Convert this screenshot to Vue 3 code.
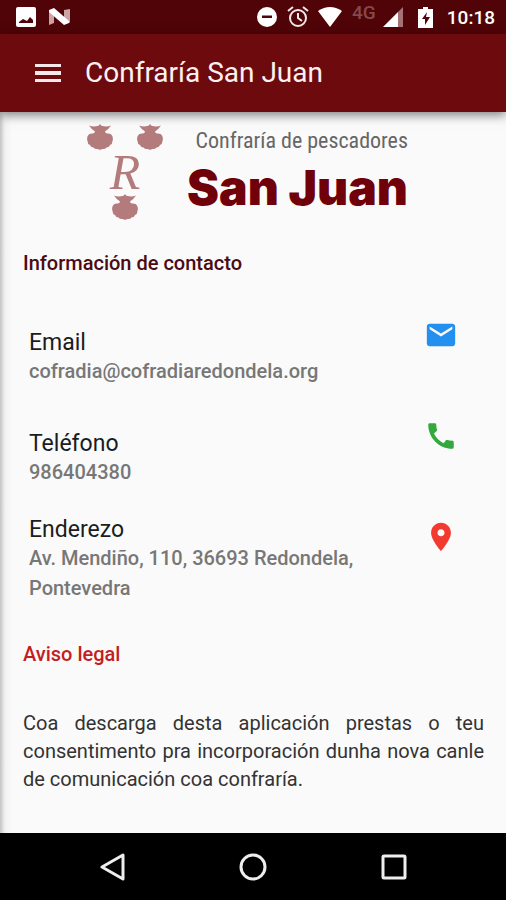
<script setup>
import { ref } from 'vue'

const menuOpen = ref(false)

const contacts = [
    {
        title: 'Email',
        text: 'cofradia@cofradiaredondela.org',
        href: 'mailto:cofradia@cofradiaredondela.org',
        color: 'blue',
        icon: 'M20 4H4c-1.1 0-1.99.9-1.99 2L2 18c0 1.1.9 2 2 2h16c1.1 0 2-.9 2-2V6c0-1.100-.9-2-2-2zm0 4l-8 5-8-5V6l8 5 8-5v2z'
    },
    {
        title: 'Teléfono',
        text: '986404380',
        href: 'tel:986404380',
        color: 'green',
        icon: 'M20.01 15.380c-1.23 0-2.420-.2-3.530-.560-.350-.120-.740-.030-1.010.240l-1.570 1.970c-2.830-1.350-5.480-3.900-6.890-6.830l1.950-1.660c.270-.280.350-.670.240-1.020-.370-1.110-.560-2.300-.560-3.530 0-.540-.450-.990-.990-.990H4.190C3.650 3 3 3.240 3 3.990 3 13.280 10.730 21 20.010 21c.710 0 .990-.630.990-1.180v-3.450c0-.540-.450-.990-.990-.990z'
    },
    {
        title: 'Enderezo',
        text: 'Av. Mendiño, 110, 36693 Redondela, Pontevedra',
        href: 'geo:0,0?q=Redondela',
        color: 'red',
        icon: 'M12 2C8.130 2 5 5.130 5 9c0 5.250 7 13 7 13s7-7.750 7-13c0-3.870-3.130-7-7-7zm0 9.500c-1.380 0-2.500-1.120-2.500-2.500s1.120-2.500 2.500-2.500 2.500 1.120 2.500 2.500-1.120 2.500-2.500 2.500z'
    }
]

// vieira do escudo
const shell = 'M13 0Q14 2 15.5 2Q20 3 24 1.500Q21 6 18 7.500Q18 9 20 9.500Q24 9 25 11.500Q26.500 14 25.500 17Q25.500 20 23 21Q22 23.500 19.500 23.500Q18 25.500 15.500 25Q13 26.500 10.500 25Q8 25.500 6.500 23.500Q4 23.500 3 21Q.5 20 .5 17Q-.5 14 1 11.500Q2 9 6 9.500Q8 9 8 7.500Q5 6 2 1.500Q6 3 10.500 2Q12 2 13 0Z'
</script>

<template>
    <div class="app">
        <div class="status-bar">
            <svg class="status-icon" viewBox="0 0 20 20">
                <path fill="#fff" fill-rule="evenodd" d="M2 0h16q2 0 2 2v16q0 2-2 2H2q-2 0-2-2V2q0-2 2-2zM3 16h14v-3l-3-3-3 4-4-2-4 3z" />
            </svg>
            <svg class="status-icon n-icon" viewBox="0 0 21 18">
                <path fill="#c9a3a5" d="M0 2l5 3v10l-5 2zM15 2l6-1v14l-6-4z" />
                <path fill="#fff" d="M0 2l5-2 15 13v2l-5 2L0 4z" />
            </svg>
            <span class="spacer"></span>
            <svg class="status-icon" viewBox="0 0 20 20">
                <circle cx="10" cy="10" r="10" fill="#fff" />
                <path fill="#500408" d="M5 8.500h10v2.500H5z" />
            </svg>
            <svg class="status-icon alarm" viewBox="0 0 22 22" fill="none" stroke="#f5e8e8" stroke-width="2">
                <circle cx="11" cy="12" r="8" />
                <path d="M11 7v5l4 3M1 5l5-4M21 5l-5-4" />
            </svg>
            <svg class="status-icon wifi" viewBox="0 0 24 20">
                <path fill="#fff" d="M0 4Q12-4 24 4L12 20z" />
            </svg>
            <span class="network">4G</span>
            <svg class="status-icon signal" viewBox="0 0 20 20">
                <path fill="#a77275" d="M15 5l5-5v20h-5z" />
                <path fill="#fff" d="M0 20L15 5v15z" />
            </svg>
            <svg class="status-icon battery" viewBox="0 0 15 21">
                <path fill="#fff" d="M5 0h5v2h5v19H0V2h5z" />
                <path fill="#500408" d="M9 5l-5 7h3v6l5-8H8z" />
            </svg>
            <span class="clock">10:18</span>
        </div>

        <header class="app-bar">
            <button type="button" class="menu-button" aria-label="Menú" :aria-expanded="menuOpen" @click="menuOpen = !menuOpen">
                <svg viewBox="0 0 26 18">
                    <path fill="#f6e9e9" d="M0 0h26v3H0zM0 7h26v4H0zM0 15h26v3H0z" />
                </svg>
            </button>
            <h1>Confraría San Juan</h1>
        </header>

        <main class="content">
            <div class="logo">
                <div class="crest">
                    <svg class="shell" viewBox="0 0 26 26"><path :d="shell" /></svg>
                    <svg class="shell" viewBox="0 0 26 26"><path :d="shell" /></svg>
                    <span class="initial">R</span>
                    <svg class="shell last" viewBox="0 0 26 26"><path :d="shell" /></svg>
                </div>
                <div class="brand">
                    <span class="brand-top">Confraría de pescadores</span>
                    <span class="brand-name">San Juan</span>
                </div>
            </div>

            <h2>Información de contacto</h2>

            <div class="contacts">
                <div v-for="item in contacts" :key="item.title" class="contact">
                    <div class="contact-text">
                        <h3>{{ item.title }}</h3>
                        <p>{{ item.text }}</p>
                    </div>
                    <a :href="item.href" class="contact-icon" :class="item.color" :aria-label="item.title">
                        <svg viewBox="0 0 24 24"><path :d="item.icon" /></svg>
                    </a>
                </div>
            </div>

            <h2 class="legal-title">Aviso legal</h2>
            <p class="legal">Coa descarga desta aplicación prestas o teu consentimento pra incorporación dunha nova canle de comunicación coa confraría.</p>
        </main>

        <nav class="nav-bar">
            <button type="button" aria-label="Atrás">
                <svg viewBox="0 0 28 28"><path d="M25 2v24L4 14z" /></svg>
            </button>
            <button type="button" aria-label="Inicio">
                <svg viewBox="0 0 28 28"><circle cx="14" cy="14" r="12" /></svg>
            </button>
            <button type="button" aria-label="Recentes">
                <svg viewBox="0 0 28 28"><rect x="3" y="3" width="22" height="22" rx="1" /></svg>
            </button>
        </nav>
    </div>
</template>

<style>
body {
    margin: 0;
    background: #fafafa;
}
</style>

<style scoped>
.app {
    display: flex;
    flex-direction: column;
    min-height: 100vh;
    font-family: Roboto, "Liberation Sans", sans-serif;
    color: #222;
}

h1, h2, h3, p {
    margin: 0;
}

button {
    padding: 0;
    border: 0;
    background: none;
    cursor: pointer;
}

svg {
    display: block;
}

.status-bar {
    display: flex;
    align-items: center;
    height: 34px;
    padding: 0 11px 0 16px;
    background: #500408;
    color: #fff;
}

.status-icon {
    width: 20px;
    height: 20px;
}

.n-icon {
    width: 21px;
    height: 18px;
    margin-left: 13px;
}

.spacer {
    flex: 1;
}

.alarm {
    width: 22px;
    height: 22px;
    margin-left: 10px;
}

.wifi {
    width: 24px;
    margin-left: 9px;
}

.network {
    align-self: flex-start;
    margin-left: 10px;
    font-size: 19px;
    line-height: 26px;
    font-weight: 500;
    color: #85494c;
}

.signal {
    margin-left: 7px;
}

.battery {
    width: 15px;
    height: 21px;
    margin-left: 15px;
}

.clock {
    margin-left: 14px;
    font-size: 19px;
    font-weight: 500;
}

.app-bar {
    position: relative;
    z-index: 2;
    display: flex;
    align-items: center;
    gap: 24px;
    height: 78px;
    padding: 0 35px;
    background: #6d0a0e;
    box-shadow: 0 3px 10px rgba(0, 0, 0, 0.5);
    color: #fcf1f1;
}

.menu-button svg {
    width: 26px;
    height: 18px;
}

.app-bar h1 {
    font-size: 28px;
    line-height: 32px;
    font-weight: 400;
}

.content {
    flex: 1;
    padding: 12px 22px 40px 23px;
    background: linear-gradient(to right, #c4c4c4, #f2f2f2 5px, #fafafa 12px);
}

.logo {
    display: flex;
    justify-content: center;
    gap: 24px;
    height: 96px;
    padding-right: 12px;
}

.crest {
    display: grid;
    grid-template-columns: 26px 26px;
    grid-template-rows: 26px 44px 26px;
    column-gap: 24px;
    justify-items: center;
    align-items: center;
    color: #b47b7d;
}

.shell {
    width: 26px;
    height: 26px;
    fill: #b47b7d;
}

.shell.last,
.initial {
    grid-column: 1 / 3;
}

.initial {
    font-family: "Liberation Serif", serif;
    font-size: 50px;
    font-style: italic;
    line-height: 44px;
}

.brand {
    display: flex;
    flex-direction: column;
    align-items: flex-end;
}

.brand-top {
    font-family: "Ubuntu Condensed", "Roboto Condensed", "Liberation Sans Narrow", Lato, sans-serif;
    font-size: 22px;
    line-height: 34px;
    color: #666;
}

.brand-name {
    font-family: "Arial Black", Inter, sans-serif;
    font-size: 48px;
    line-height: 60px;
    font-weight: 900;
    color: #70000a;
}

h2 {
    margin-top: 29px;
    font-size: 20px;
    line-height: 28px;
    font-weight: 500;
    color: #4a0b14;
}

.contacts {
    margin-top: 30px;
}

.contact {
    display: flex;
    align-items: center;
    justify-content: space-between;
    min-height: 101px;
    padding: 0 26px 0 6px;
}

.contact-text {
    max-width: 360px;
}

h3 {
    font-size: 23px;
    line-height: 26px;
    font-weight: 400;
    color: #1c1c1c;
}

.contact-text p {
    font-size: 20px;
    line-height: 30px;
    font-weight: 500;
    color: #777;
}

.contact-icon {
    align-self: flex-start;
    padding-top: 11px;
}

.contact-icon svg {
    width: 34px;
    height: 34px;
    fill: currentColor;
}

.blue {
    color: #2390f0;
}

.green {
    color: #33a83c;
}

.red {
    color: #f23a30;
}

.legal-title {
    margin-top: 30px;
    color: #c41d22;
}

.legal {
    margin-top: 41px;
    font-size: 20px;
    line-height: 28px;
    text-align: justify;
    color: #333;
}

.nav-bar {
    display: flex;
    align-items: center;
    justify-content: space-around;
    height: 67px;
    padding: 0 42px;
    background: #000;
}

.nav-bar svg {
    width: 28px;
    height: 28px;
    fill: none;
    stroke: #eee;
    stroke-width: 3;
    stroke-linejoin: round;
}
</style>
